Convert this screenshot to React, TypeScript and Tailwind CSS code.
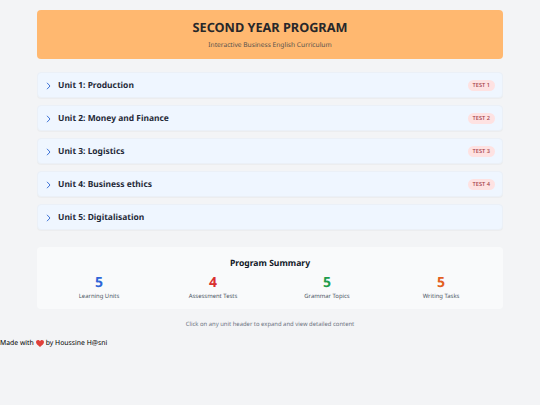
const units = [
  { title: "Unit 1: Production", test: "TEST 1" },
  { title: "Unit 2: Money and Finance", test: "TEST 2" },
  { title: "Unit 3: Logistics", test: "TEST 3" },
  { title: "Unit 4: Business ethics", test: "TEST 4" },
  { title: "Unit 5: Digitalisation", test: "" },
];

const stats = [
  { value: "5", label: "Learning Units", color: "text-[#2f66d8]" },
  { value: "4", label: "Assessment Tests", color: "text-[#d92f2f]" },
  { value: "5", label: "Grammar Topics", color: "text-[#1f9d4d]" },
  { value: "5", label: "Writing Tasks", color: "text-[#e2601f]" },
];

export default function App() {
  return (
    <div className="min-h-[405px] bg-[#f3f4f6] font-['Noto_Sans',sans-serif] antialiased [text-rendering:geometricPrecision] pt-[10px]">
      <div className="mx-[37px] w-[466px]">
        <div className="h-[49px] rounded-[4px] bg-[#ffb870] pt-[9px] text-center">
          <h1 className="text-[12.7px] leading-[17px] font-bold text-[#27272a]">SECOND YEAR PROGRAM</h1>
          <p className="mt-[4px] text-[6.65px] leading-[10px] text-[#57534e]">Interactive Business English Curriculum</p>
        </div>

        <div className="mt-[13px] flex flex-col gap-[7px]">
          {units.map((unit) => (
            <div
              key={unit.title}
              className="flex h-[26px] items-center justify-between rounded-[4px] border border-[#ebf0f7] bg-[#eff6ff] px-[7px] pt-[1px] shadow-[0_1px_1px_rgba(0,0,0,0.03)]"
            >
              <div className="flex items-center gap-[7px]">
                <svg width="5" height="8" viewBox="0 0 5 8" fill="none" className="ml-[1px]">
                  <path d="M1 0.8 L4 4 L1 7.2" stroke="#3f74d6" strokeWidth="1" />
                </svg>
                <span className="text-[8.45px] leading-[13px] font-bold text-[#1f2937]">{unit.title}</span>
              </div>
              {unit.test && (
                <span className="rounded-full bg-[#fee2e2] px-[5px] py-[1px] text-[5.7px] leading-[9px] font-medium text-[#a23b45]">
                  {unit.test}
                </span>
              )}
            </div>
          ))}
        </div>

        <div className="mt-[17px] h-[62px] rounded-[4px] bg-[#f9fafb] pt-[10px]">
          <h2 className="text-center text-[8.6px] leading-[13px] font-bold text-[#111827]">Program Summary</h2>
          <div className="mt-[3px] grid grid-cols-4 px-[5px]">
            {stats.map((stat) => (
              <div key={stat.label} className="text-center">
                <div className={`text-[14px] leading-[19px] font-bold ${stat.color}`}>{stat.value}</div>
                <div className="text-[5.9px] leading-[8px] text-[#4b5563]">{stat.label}</div>
              </div>
            ))}
          </div>
        </div>

        <p className="mt-[11px] text-center text-[5.9px] leading-[9px] text-[#6b7280]">
          Click on any unit header to expand and view detailed content
        </p>
      </div>

      <p className="mt-[10px] flex items-center text-[6.85px] leading-[10px] whitespace-pre text-black">
        <span>Made with</span>
        <svg width="8" height="7" viewBox="0 0 16 14" className="mr-[2px] mb-[1px] ml-[2px]">
          <path d="M8 14 C3 10 0 7.5 0 4 C0 1.5 2 0 4 0 C5.6 0 7.2 1 8 2.5 C8.8 1 10.4 0 12 0 C14 0 16 1.5 16 4 C16 7.5 13 10 8 14 Z" fill="#e0403a" />
        </svg>
        <span>by Houssine H@sni</span>
      </p>
    </div>
  );
}
